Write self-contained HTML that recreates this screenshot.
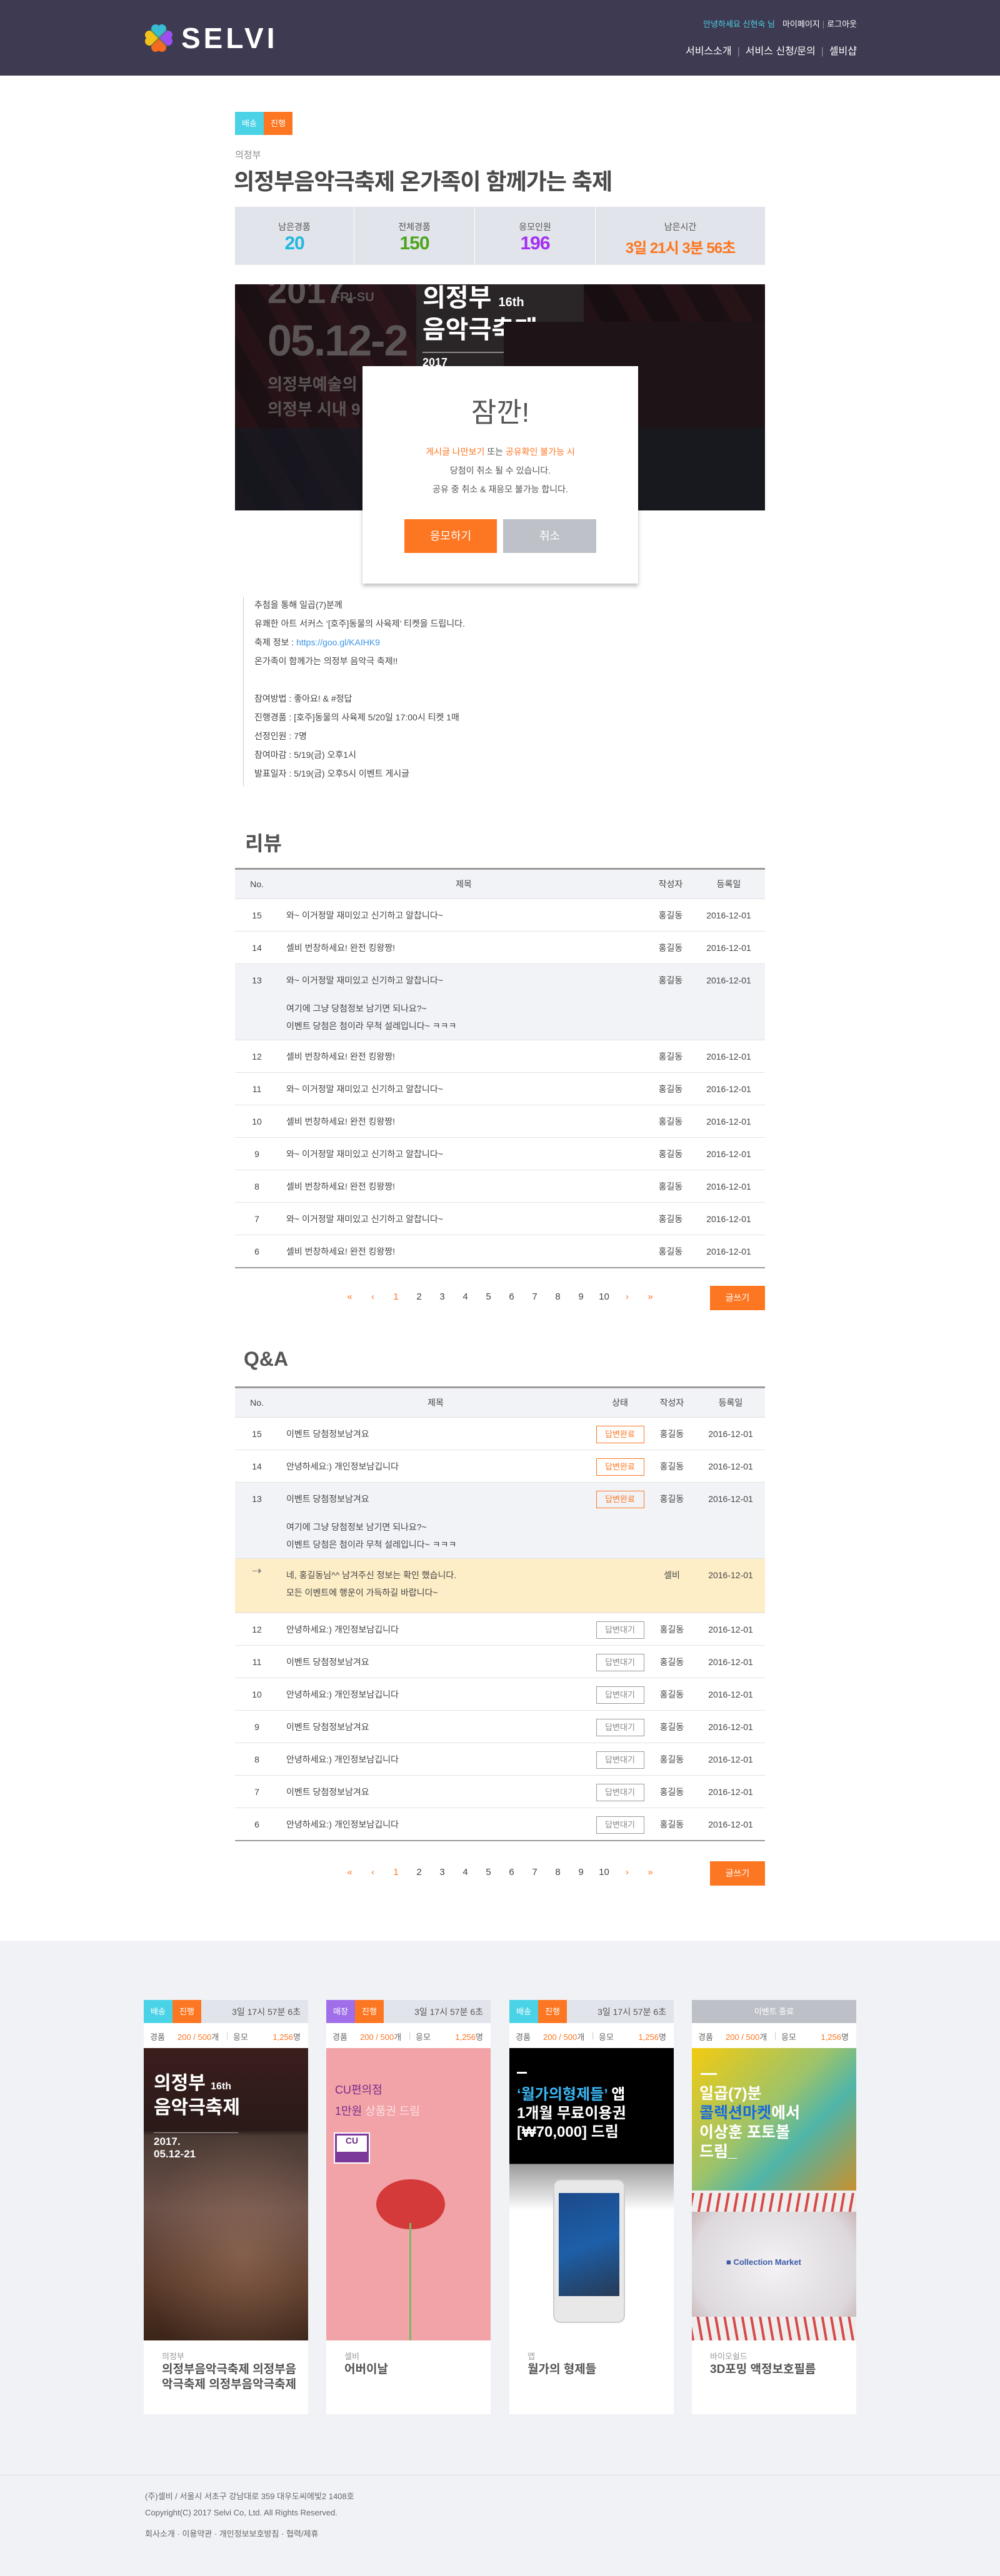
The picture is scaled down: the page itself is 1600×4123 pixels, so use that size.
<!DOCTYPE html>
<html><head><meta charset="utf-8">
<style>
*{margin:0;padding:0;box-sizing:border-box}
body{width:1600px;height:4123px;position:relative;background:#fff;font-family:"Liberation Sans","Noto Sans CJK KR",sans-serif;color:#444;overflow:hidden}
.a{position:absolute}
.hdr{left:0;top:0;width:1600px;height:121px;background:#3e3a51}
.tl{font-size:13px;color:#fff;white-space:nowrap}
.nav{font-size:16px;color:#fff;white-space:nowrap}
.sep{color:#8c879c;margin:0 9px}
.stat{top:331px;height:93px;background:#e1e4ea}
.stat div{position:absolute;left:0;right:0;text-align:center}
.lab{top:22px;font-size:14px;color:#555}
.num{top:42px;font-size:30px;font-weight:bold;letter-spacing:-1px}
.desc{font-size:14px;color:#444;line-height:30px}
table{border-collapse:collapse;width:848px;font-size:14px;color:#444}
th{height:48px;background:#f2f3f7;font-weight:normal;border-top:3px solid #9a9a9a;border-bottom:1px solid #ddd;color:#444}
td{height:52px;border-bottom:1px solid #e2e2e2;vertical-align:top;padding-top:17px;line-height:18px}
td.c{text-align:center}
tr.g td{background:#f2f3f7}
tr.y td{background:#fdeec8}
.st{display:inline-block;width:77px;height:28px;line-height:26px;border:1px solid #fd7622;color:#fd7622;font-size:13px;text-align:center;margin-top:-5px}
.st.w{border-color:#999;color:#888}
.pg{font-size:15px;color:#444;white-space:nowrap}
.pg span{display:inline-block;width:37px;text-align:center}
.pg .o{color:#fd7622}
.btn{width:88px;height:39px;background:#fd7622;color:#fff;font-size:14px;text-align:center;line-height:39px}
.card{top:3201px;width:263px;height:663px;background:#fff}
.ch{height:37px;background:#e1e4ea;position:relative;font-size:14px;color:#555}
.bd{position:absolute;top:0;width:46px;height:37px;color:#fff;font-size:13px;text-align:center;line-height:37px}
.cr{height:40px;position:relative;font-size:13px;color:#666}
.ci{height:468px;position:relative;overflow:hidden}
.cat{position:absolute;left:29px;top:560px;font-size:13px;color:#999}
.ct{position:absolute;left:29px;top:580px;width:220px;font-size:19px;font-weight:bold;color:#555;line-height:24px}
</style></head><body>

<div class="a hdr"></div>
<svg class="a" style="left:232px;top:39px" width="44" height="44" viewBox="0 0 44 44">
<circle cx="17" cy="7" r="7" fill="#39bcd2"/><circle cx="27" cy="7" r="7" fill="#39bcd2"/>
<circle cx="37" cy="17" r="7" fill="#9b4ff0"/><circle cx="37" cy="27" r="7" fill="#9b4ff0"/>
<circle cx="17" cy="37" r="7" fill="#f46a22"/><circle cx="27" cy="37" r="7" fill="#f46a22"/>
<circle cx="7" cy="17" r="7" fill="#f3c21a"/><circle cx="7" cy="27" r="7" fill="#f3c21a"/>
<rect x="10" y="10" width="24" height="24" fill="#f46a22"/>
<polygon points="10,10 34,10 22,22" fill="#39bcd2"/><polygon points="34,10 34,34 22,22" fill="#9b4ff0"/><polygon points="10,10 10,34 22,22" fill="#f3c21a"/>
<path d="M8 8L36 36M36 8L8 36" stroke="#3a7a2a" stroke-width="2" opacity=".6"/>
</svg>
<div class="a" style="left:290px;top:38px;font-size:46px;font-weight:bold;color:#fff;letter-spacing:5px;line-height:46px">SELVI</div>
<div class="a tl" style="right:229px;top:28px"><span style="color:#4ad2e6">안녕하세요 신현숙 님</span><span style="margin:0 6px"></span>마이페이지<span class="sep" style="margin:0 4px">|</span>로그아웃</div>
<div class="a nav" style="right:229px;top:68px">서비스소개<span class="sep">|</span>서비스 신청/문의<span class="sep">|</span>셀비샵</div>

<div class="a" style="left:376px;top:179px;width:46px;height:37px;background:#4ad2e6;color:#fff;font-size:13px;text-align:center;line-height:37px">배송</div>
<div class="a" style="left:422px;top:179px;width:46px;height:37px;background:#fd7622;color:#fff;font-size:13px;text-align:center;line-height:37px">진행</div>
<div class="a" style="left:376px;top:237px;font-size:15px;color:#888">의정부</div>
<div class="a" style="left:374px;top:262px;font-size:36px;font-weight:bold;color:#4a4a4a;letter-spacing:-1px">의정부음악극축제 온가족이 함께가는 축제</div>

<div class="a stat" style="left:376px;width:190px"><div class="lab">남은경품</div><div class="num" style="color:#23b8e0">20</div></div>
<div class="a stat" style="left:567px;width:192px"><div class="lab">전체경품</div><div class="num" style="color:#4ea51c">150</div></div>
<div class="a stat" style="left:760px;width:192px"><div class="lab">응모인원</div><div class="num" style="color:#a52ef2">196</div></div>
<div class="a stat" style="left:953px;width:271px"><div class="lab">남은시간</div><div class="num" style="color:#fd7622;font-size:24px;top:46px">3일 21시 3분 56초</div></div>

<div class="a" style="left:376px;top:455px;width:848px;height:362px;background:linear-gradient(90deg,#1a0f12,#24151a 40%,#150d10 60%,#1c1114);overflow:hidden">
<div class="a" style="left:0;top:0;width:848px;height:362px;background:repeating-linear-gradient(60deg,rgba(120,40,50,.12) 0 30px,rgba(0,0,0,0) 30px 70px)"></div>
<div class="a" style="left:52px;top:-22px;font-size:56px;font-weight:bold;color:#5a5455">2017.</div>
<div class="a" style="left:156px;top:10px;font-size:20px;font-weight:bold;color:#5a5455">FRI-SU</div>
<div class="a" style="left:52px;top:50px;font-size:70px;font-weight:bold;color:#5a5455;letter-spacing:-2px">05.12-2</div>
<div class="a" style="left:52px;top:140px;font-size:26px;font-weight:bold;color:#5a5455">의정부예술의</div>
<div class="a" style="left:52px;top:180px;font-size:26px;font-weight:bold;color:#5a5455">의정부 시내 9</div>
<div class="a" style="left:290px;top:0;width:268px;height:260px;background:#2a2627"></div>
<div class="a" style="left:300px;top:0;font-size:40px;font-weight:bold;color:#fff;line-height:44px">의정부 <span style="font-size:20px">16th</span><br>음악극축제</div>
<div class="a" style="left:300px;top:108px;width:130px;height:2px;background:#888"></div>
<div class="a" style="left:300px;top:115px;font-size:18px;font-weight:bold;color:#fff">2017</div>
<div class="a" style="left:430px;top:60px;width:418px;height:302px;background:#1e1418"></div>
<div class="a" style="left:0;top:230px;width:848px;height:132px;background:#141a24;opacity:.6"></div>
</div>

<div class="a" style="left:580px;top:586px;width:441px;height:348px;background:#fff;box-shadow:0 4px 6px rgba(0,0,0,.25)">
<div class="a" style="left:0;width:441px;top:38px;text-align:center;font-size:44px;color:#555">잠깐!</div>
<div class="a" style="left:0;width:441px;top:122px;text-align:center;font-size:14px;color:#555;line-height:30px"><span style="color:#fd7622">게시글 나만보기</span> 또는 <span style="color:#fd7622">공유확인 불가능 시</span><br>당첨이 취소 될 수 있습니다.<br>공유 중 취소 &amp; 재응모 불가능 합니다.</div>
<div class="a" style="left:67px;top:245px;width:148px;height:54px;background:#fd7622;color:#fff;font-size:18px;text-align:center;line-height:54px">응모하기</div>
<div class="a" style="left:225px;top:245px;width:149px;height:54px;background:#bec2c8;color:#fff;font-size:18px;text-align:center;line-height:54px">취소</div>
</div>

<div class="a" style="left:389px;top:955px;width:1px;height:303px;background:#ccc"></div>
<div class="a desc" style="left:407px;top:953px">추첨을 통해 일곱(7)분께<br>유쾌한 아트 서커스 ‘[호주]동물의 사육제’ 티켓을 드립니다.<br>축제 정보 : <span style="color:#3a95e8">https://goo.gl/KAIHK9</span><br>온가족이 함께가는 의정부 음악극 축제!!<br>&nbsp;<br>참여방법 : 좋아요! &amp; #정답<br>진행경품 : [호주]동물의 사육제 5/20일 17:00시 티켓 1매<br>선정인원 : 7명<br>참여마감 : 5/19(금) 오후1시<br>발표일자 : 5/19(금) 오후5시 이벤트 게시글</div>

<div class="a" style="left:392px;top:1325px;font-size:32px;font-weight:bold;color:#555">리뷰</div>
<table class="a" style="left:376px;top:1389px">
<tr><th style="width:70px">No.</th><th>제목</th><th style="width:70px">작성자</th><th style="width:116px">등록일</th></tr>
<tr><td class="c">15</td><td style="padding-left:12px">와~ 이거정말 재미있고 신기하고 알찹니다~</td><td class="c">홍길동</td><td class="c">2016-12-01</td></tr>
<tr><td class="c">14</td><td style="padding-left:12px">셀비 번창하세요! 완전 킹왕짱!</td><td class="c">홍길동</td><td class="c">2016-12-01</td></tr>
<tr class="g"><td class="c" style="height:122px">13</td><td style="padding-left:12px;line-height:18px">와~ 이거정말 재미있고 신기하고 알찹니다~<div style="margin-top:22px;line-height:28px">여기에 그냥 당첨정보 남기면 되나요?~<br>이벤트 당첨은 첨이라 무척 설레입니다~ ㅋㅋㅋ</div></td><td class="c">홍길동</td><td class="c">2016-12-01</td></tr>
<tr><td class="c">12</td><td style="padding-left:12px">셀비 번창하세요! 완전 킹왕짱!</td><td class="c">홍길동</td><td class="c">2016-12-01</td></tr>
<tr><td class="c">11</td><td style="padding-left:12px">와~ 이거정말 재미있고 신기하고 알찹니다~</td><td class="c">홍길동</td><td class="c">2016-12-01</td></tr>
<tr><td class="c">10</td><td style="padding-left:12px">셀비 번창하세요! 완전 킹왕짱!</td><td class="c">홍길동</td><td class="c">2016-12-01</td></tr>
<tr><td class="c">9</td><td style="padding-left:12px">와~ 이거정말 재미있고 신기하고 알찹니다~</td><td class="c">홍길동</td><td class="c">2016-12-01</td></tr>
<tr><td class="c">8</td><td style="padding-left:12px">셀비 번창하세요! 완전 킹왕짱!</td><td class="c">홍길동</td><td class="c">2016-12-01</td></tr>
<tr><td class="c">7</td><td style="padding-left:12px">와~ 이거정말 재미있고 신기하고 알찹니다~</td><td class="c">홍길동</td><td class="c">2016-12-01</td></tr>
<tr><td class="c" style="border-bottom:2px solid #9a9a9a">6</td><td style="padding-left:12px;border-bottom:2px solid #9a9a9a">셀비 번창하세요! 완전 킹왕짱!</td><td class="c" style="border-bottom:2px solid #9a9a9a">홍길동</td><td class="c" style="border-bottom:2px solid #9a9a9a">2016-12-01</td></tr>
</table>
<div class="a pg" style="left:541px;top:2067px"><span class="o">«</span><span class="o">‹</span><span class="o">1</span><span>2</span><span>3</span><span>4</span><span>5</span><span>6</span><span>7</span><span>8</span><span>9</span><span>10</span><span class="o">›</span><span class="o">»</span></div>
<div class="a btn" style="left:1136px;top:2058px">글쓰기</div>

<div class="a" style="left:390px;top:2157px;font-size:32px;font-weight:bold;color:#555">Q&amp;A</div>
<table class="a" style="left:376px;top:2219px">
<tr><th style="width:70px">No.</th><th>제목</th><th style="width:88px">상태</th><th style="width:78px">작성자</th><th style="width:110px">등록일</th></tr>
<tr><td class="c">15</td><td style="padding-left:12px">이벤트 당첨정보남겨요</td><td class="c"><span class="st">답변완료</span></td><td class="c">홍길동</td><td class="c">2016-12-01</td></tr>
<tr><td class="c">14</td><td style="padding-left:12px">안녕하세요:) 개인정보남깁니다</td><td class="c"><span class="st">답변완료</span></td><td class="c">홍길동</td><td class="c">2016-12-01</td></tr>
<tr class="g"><td class="c" style="height:122px">13</td><td style="padding-left:12px">이벤트 당첨정보남겨요<div style="margin-top:22px;line-height:28px">여기에 그냥 당첨정보 남기면 되나요?~<br>이벤트 당첨은 첨이라 무척 설레입니다~ ㅋㅋㅋ</div></td><td class="c"><span class="st">답변완료</span></td><td class="c">홍길동</td><td class="c">2016-12-01</td></tr>
<tr class="y"><td class="c" style="height:87px;color:#777;font-size:18px;padding-top:10px">⇢</td><td style="padding-left:12px;line-height:28px;padding-top:12px">네, 홍길동님^^ 남겨주신 정보는 확인 했습니다.<br>모든 이벤트에 행운이 가득하길 바랍니다~</td><td></td><td class="c">셀비</td><td class="c">2016-12-01</td></tr>
<tr><td class="c">12</td><td style="padding-left:12px">안녕하세요:) 개인정보남깁니다</td><td class="c"><span class="st w">답변대기</span></td><td class="c">홍길동</td><td class="c">2016-12-01</td></tr>
<tr><td class="c">11</td><td style="padding-left:12px">이벤트 당첨정보남겨요</td><td class="c"><span class="st w">답변대기</span></td><td class="c">홍길동</td><td class="c">2016-12-01</td></tr>
<tr><td class="c">10</td><td style="padding-left:12px">안녕하세요:) 개인정보남깁니다</td><td class="c"><span class="st w">답변대기</span></td><td class="c">홍길동</td><td class="c">2016-12-01</td></tr>
<tr><td class="c">9</td><td style="padding-left:12px">이벤트 당첨정보남겨요</td><td class="c"><span class="st w">답변대기</span></td><td class="c">홍길동</td><td class="c">2016-12-01</td></tr>
<tr><td class="c">8</td><td style="padding-left:12px">안녕하세요:) 개인정보남깁니다</td><td class="c"><span class="st w">답변대기</span></td><td class="c">홍길동</td><td class="c">2016-12-01</td></tr>
<tr><td class="c">7</td><td style="padding-left:12px">이벤트 당첨정보남겨요</td><td class="c"><span class="st w">답변대기</span></td><td class="c">홍길동</td><td class="c">2016-12-01</td></tr>
<tr><td class="c" style="border-bottom:2px solid #9a9a9a">6</td><td style="padding-left:12px;border-bottom:2px solid #9a9a9a">안녕하세요:) 개인정보남깁니다</td><td class="c" style="border-bottom:2px solid #9a9a9a"><span class="st w">답변대기</span></td><td class="c" style="border-bottom:2px solid #9a9a9a">홍길동</td><td class="c" style="border-bottom:2px solid #9a9a9a">2016-12-01</td></tr>
</table>
<div class="a pg" style="left:541px;top:2988px"><span class="o">«</span><span class="o">‹</span><span class="o">1</span><span>2</span><span>3</span><span>4</span><span>5</span><span>6</span><span>7</span><span>8</span><span>9</span><span>10</span><span class="o">›</span><span class="o">»</span></div>
<div class="a btn" style="left:1136px;top:2979px">글쓰기</div>

<div class="a" style="left:0;top:3106px;width:1600px;height:1017px;background:#f1f2f6"></div>

<!-- card 1 -->
<div class="a card" style="left:230px">
<div class="ch"><div class="bd" style="left:0;background:#4ad2e6">배송</div><div class="bd" style="left:46px;background:#fd7622">진행</div><div style="position:absolute;right:12px;top:9px">3일 17시 57분 6초</div></div>
<div class="cr"><span style="position:absolute;left:10px;top:12px">경품</span><span style="position:absolute;left:54px;top:12px;color:#fd7622">200 / 500<span style="color:#666">개</span></span><span style="position:absolute;left:132px;top:12px;color:#ccc">|</span><span style="position:absolute;left:143px;top:12px">응모</span><span style="position:absolute;right:12px;top:12px;color:#fd7622">1,256<span style="color:#666">명</span></span></div>
<div class="ci" style="background:linear-gradient(180deg,#3a1e1c 0,#2a1a18 28%,#4a3a34 30%,#6a5048 55%,#5a3a2a 80%,#3a2418 100%)">
<div class="a" style="left:0;top:130px;width:263px;height:338px;background:radial-gradient(ellipse at 60% 60%,rgba(200,150,120,.35),rgba(0,0,0,0) 70%)"></div>
<div class="a" style="left:16px;top:40px;font-size:30px;font-weight:bold;color:#fff;line-height:34px">의정부 <span style="font-size:16px">16th</span><br>음악극축제</div>
<div class="a" style="left:16px;top:135px;width:135px;height:1px;background:#aaa"></div>
<div class="a" style="left:16px;top:140px;font-size:17px;font-weight:bold;color:#fff;line-height:20px">2017.<br>05.12-21</div>
</div>
<div class="cat">의정부</div><div class="ct">의정부음악극축제 의정부음악극축제 의정부음악극축제</div>
</div>

<!-- card 2 -->
<div class="a card" style="left:522px">
<div class="ch"><div class="bd" style="left:0;background:#a06ee8">매장</div><div class="bd" style="left:46px;background:#fd7622">진행</div><div style="position:absolute;right:12px;top:9px">3일 17시 57분 6초</div></div>
<div class="cr"><span style="position:absolute;left:10px;top:12px">경품</span><span style="position:absolute;left:54px;top:12px;color:#fd7622">200 / 500<span style="color:#666">개</span></span><span style="position:absolute;left:132px;top:12px;color:#ccc">|</span><span style="position:absolute;left:143px;top:12px">응모</span><span style="position:absolute;right:12px;top:12px;color:#fd7622">1,256<span style="color:#666">명</span></span></div>
<div class="ci" style="background:#f2a3a8">
<div class="a" style="left:14px;top:50px;font-size:18px;color:#7a2b8a;line-height:34px">CU편의점<br>1만원 <span style="color:#fbe0e2">상품권 드림</span></div>
<div class="a" style="left:12px;top:135px;width:58px;height:50px;background:#7b3a9a;border:2px solid #fff"><div style="background:#fff;margin:3px;height:26px;font-size:14px;font-weight:bold;color:#6a2a8a;text-align:center">CU</div></div>
<div class="a" style="left:80px;top:210px;width:110px;height:80px;border-radius:50%;background:#d43a3a"></div>
<div class="a" style="left:133px;top:280px;width:3px;height:188px;background:#7ab86a"></div>
</div>
<div class="cat">셀비</div><div class="ct">어버이날</div>
</div>

<!-- card 3 -->
<div class="a card" style="left:815px">
<div class="ch"><div class="bd" style="left:0;background:#4ad2e6">배송</div><div class="bd" style="left:46px;background:#fd7622">진행</div><div style="position:absolute;right:12px;top:9px">3일 17시 57분 6초</div></div>
<div class="cr"><span style="position:absolute;left:10px;top:12px">경품</span><span style="position:absolute;left:54px;top:12px;color:#fd7622">200 / 500<span style="color:#666">개</span></span><span style="position:absolute;left:132px;top:12px;color:#ccc">|</span><span style="position:absolute;left:143px;top:12px">응모</span><span style="position:absolute;right:12px;top:12px;color:#fd7622">1,256<span style="color:#666">명</span></span></div>
<div class="ci" style="background:linear-gradient(180deg,#000 0,#000 185px,#9a9a9a 186px,#fff 260px,#fff)">
<div class="a" style="left:12px;top:38px;width:16px;height:3px;background:#fff"></div>
<div class="a" style="left:12px;top:60px;font-size:24px;font-weight:bold;color:#fff;line-height:30px;white-space:nowrap"><span style="color:#3ab4f0">‘월가의형제들’</span> 앱<br>1개월 무료이용권<br>[₩70,000] 드림</div>
<div class="a" style="left:70px;top:210px;width:115px;height:230px;border-radius:12px;background:#e8e8e8;border:2px solid #ccc"><div style="margin:20px 7px;height:165px;background:linear-gradient(160deg,#1b4a8a,#1d5fa8 50%,#263a55)"></div></div>
</div>
<div class="cat">앱</div><div class="ct">월가의 형제들</div>
</div>

<!-- card 4 -->
<div class="a card" style="left:1107px">
<div class="ch" style="background:#bdc1c7;color:#fff;text-align:center;line-height:37px;font-size:13px">이벤트 종료</div>
<div class="cr"><span style="position:absolute;left:10px;top:12px">경품</span><span style="position:absolute;left:54px;top:12px;color:#fd7622">200 / 500<span style="color:#666">개</span></span><span style="position:absolute;left:132px;top:12px;color:#ccc">|</span><span style="position:absolute;left:143px;top:12px">응모</span><span style="position:absolute;right:12px;top:12px;color:#fd7622">1,256<span style="color:#666">명</span></span></div>
<div class="ci" style="background:#eee">
<div class="a" style="left:0;top:0;width:263px;height:228px;background:linear-gradient(135deg,#f3cb10 0,#9dc36a 45%,#4fb5a8 65%,#c7912e 100%)"></div>
<div class="a" style="left:14px;top:40px;width:26px;height:3px;background:#fff"></div>
<div class="a" style="left:12px;top:58px;font-size:25px;font-weight:bold;color:#fff;line-height:31px;white-space:nowrap">일곱(7)분<br><span style="color:#1a6cd8">콜렉션마켓</span>에서<br>이상훈 포토볼<br>드림_</div>
<div class="a" style="left:0;top:232px;width:263px;height:236px;background:radial-gradient(ellipse at 50% 50%,#f4f2f4,#dcd8dc 70%,#c0a0a0)"></div>
<div class="a" style="left:0;top:232px;width:263px;height:30px;background:repeating-linear-gradient(100deg,#d84a4a 0 4px,#eee 4px 14px)"></div>
<div class="a" style="left:0;top:430px;width:263px;height:38px;background:repeating-linear-gradient(80deg,#d84a4a 0 4px,#eee 4px 14px)"></div>
<div class="a" style="left:55px;top:335px;font-size:13px;font-weight:bold;color:#3a5aa8">■ Collection Market</div>
</div>
<div class="cat">바이오쉴드</div><div class="ct">3D포밍 액정보호필름</div>
</div>

<div class="a" style="left:0;top:3961px;width:1600px;height:1px;background:#dcdcdc"></div>
<div class="a" style="left:232px;top:3983px;font-size:13px;color:#666;line-height:26px">(주)셀비 / 서울시 서초구 강남대로 359 대우도씨에빛2 1408호<br>Copyright(C) 2017 Selvi Co, Ltd. All Rights Reserved.</div>
<div class="a" style="left:232px;top:4045px;font-size:13px;color:#666">회사소개 · 이용약관 · 개인정보보호방침 · 협력/제휴</div>
</body></html>
